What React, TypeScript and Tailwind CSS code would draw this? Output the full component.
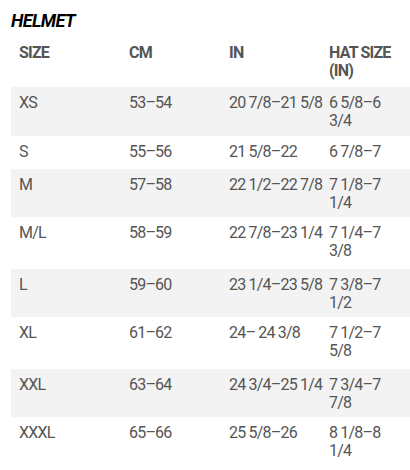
const rows = [
  { size: "XS", cm: "53–54", inch: "20 7/8–21 5/8", hat: "6 5/8–6 3/4", h: "h-[49px]" },
  { size: "S", cm: "55–56", inch: "21 5/8–22", hat: "6 7/8–7", h: "h-[33px]" },
  { size: "M", cm: "57–58", inch: "22 1/2–22 7/8", hat: "7 1/8–7 1/4", h: "h-[48px]" },
  { size: "M/L", cm: "58–59", inch: "22 7/8–23 1/4", hat: "7 1/4–7 3/8", h: "h-[52px]" },
  { size: "L", cm: "59–60", inch: "23 1/4–23 5/8", hat: "7 3/8–7 1/2", h: "h-[48px]" },
  { size: "XL", cm: "61–62", inch: "24– 24 3/8", hat: "7 1/2–7 5/8", h: "h-[52px]" },
  { size: "XXL", cm: "63–64", inch: "24 3/4–25 1/4", hat: "7 3/4–7 7/8", h: "h-[48px]" },
  { size: "XXXL", cm: "65–66", inch: "25 5/8–26", hat: "8 1/8–8 1/4", h: "h-[50px]" },
];

export default function App() {
  return (
    <div className="h-[470px] w-[410px] overflow-hidden bg-white pl-[11px] pt-[11px] font-['Roboto',sans-serif]">
      <h2 className="text-[18px] font-bold italic leading-[20px] tracking-[-0.6px] text-black">HELMET</h2>
      <table className="mt-[7px] w-[399px] table-fixed border-collapse text-[16px] leading-[17.6px] tracking-[-0.8px] text-[#555555]">
        <colgroup>
          <col className="w-[110px]" />
          <col className="w-[100px]" />
          <col className="w-[100px]" />
          <col className="w-[89px]" />
        </colgroup>
        <thead>
          <tr className="h-[49px] align-top font-bold">
            <th className="pt-[6px] pl-2 text-left">SIZE</th>
            <th className="pt-[6px] pl-2 text-left">CM</th>
            <th className="pt-[6px] pl-2 text-left">IN</th>
            <th className="pt-[6px] pl-2 text-left">
              <div className="w-[64px]">HAT SIZE (IN)</div>
            </th>
          </tr>
        </thead>
        <tbody>
          {rows.map((r, i) => (
            <tr key={r.size} className={`${r.h} align-top ${i % 2 === 0 ? "bg-[#f3f3f3]" : "bg-white"}`}>
              <td className="pt-[7px] pl-2">{r.size}</td>
              <td className="pt-[7px] pl-2">{r.cm}</td>
              <td className="whitespace-nowrap pt-[7px] pl-2">{r.inch}</td>
              <td className="pt-[7px] pl-2">
                <div className="w-[64px]">{r.hat}</div>
              </td>
            </tr>
          ))}
        </tbody>
      </table>
    </div>
  );
}
